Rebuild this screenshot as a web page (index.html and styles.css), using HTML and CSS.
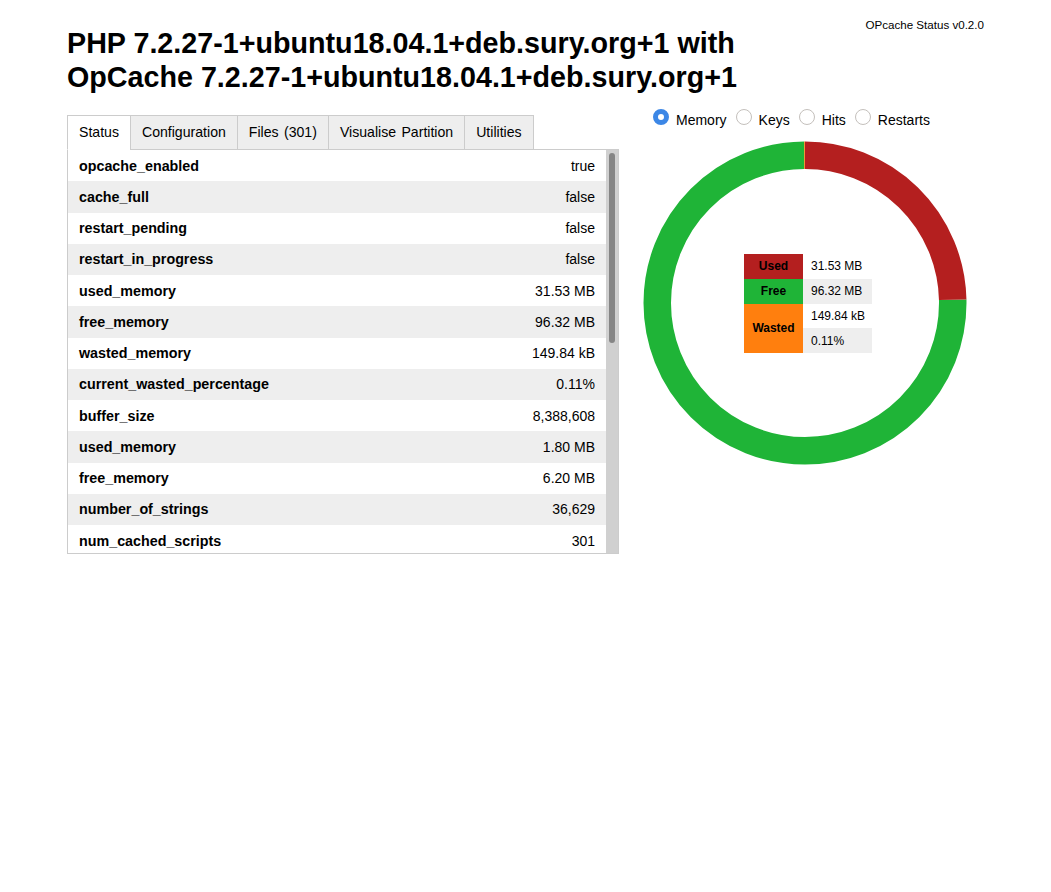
FILE: index.html
```html
<!DOCTYPE html>
<html lang="en">
<head>
<meta charset="utf-8">
<title>OPcache Status</title>
<link rel="stylesheet" href="styles.css">
</head>
<body>
<div class="container">
  <header class="header">
    <h1 class="title">PHP 7.2.27-1+ubuntu18.04.1+deb.sury.org+1 with OpCache 7.2.27-1+ubuntu18.04.1+deb.sury.org+1</h1>
    <div class="version">OPcache Status v0.2.0</div>
  </header>
  <main class="main">
    <section class="left">
      <nav class="tabs">
        <span class="tab active">Status</span>
        <span class="tab">Configuration</span>
        <span class="tab">Files (301)</span>
        <span class="tab">Visualise Partition</span>
        <span class="tab">Utilities</span>
      </nav>
      <div class="panel">
        <div class="panel-body">
          <table class="status">
            <tr><th>opcache_enabled</th><td>true</td></tr>
            <tr><th>cache_full</th><td>false</td></tr>
            <tr><th>restart_pending</th><td>false</td></tr>
            <tr><th>restart_in_progress</th><td>false</td></tr>
            <tr><th>used_memory</th><td>31.53 MB</td></tr>
            <tr><th>free_memory</th><td>96.32 MB</td></tr>
            <tr><th>wasted_memory</th><td>149.84 kB</td></tr>
            <tr><th>current_wasted_percentage</th><td>0.11%</td></tr>
            <tr><th>buffer_size</th><td>8,388,608</td></tr>
            <tr><th>used_memory</th><td>1.80 MB</td></tr>
            <tr><th>free_memory</th><td>6.20 MB</td></tr>
            <tr><th>number_of_strings</th><td>36,629</td></tr>
            <tr><th>num_cached_scripts</th><td>301</td></tr>
          </table>
        </div>
        <div class="scrollbar"><div class="thumb"></div></div>
      </div>
    </section>
    <section class="right">
      <form class="radios">
        <label class="radio"><input type="radio" name="graph" checked><span>Memory</span></label>
        <label class="radio"><input type="radio" name="graph"><span>Keys</span></label>
        <label class="radio"><input type="radio" name="graph"><span>Hits</span></label>
        <label class="radio"><input type="radio" name="graph"><span>Restarts</span></label>
      </form>
      <div class="chart">
        <svg class="donut" width="324" height="324" viewBox="0 0 324 324">
          <g transform="rotate(-90 162 162)">
            <circle cx="162" cy="162" r="147.75" fill="none" stroke="#1FB437" stroke-width="27.5" stroke-dasharray="698.6 2000" stroke-dashoffset="-228.68"/>
            <circle cx="162" cy="162" r="147.75" fill="none" stroke="#B41F1F" stroke-width="27.5" stroke-dasharray="228.68 2000"/>
            <circle cx="162" cy="162" r="147.75" fill="none" stroke="#FF7F0E" stroke-width="27.5" stroke-dasharray="1.2 2000" stroke-dashoffset="-927.2"/>
          </g>
        </svg>
        <table class="legend">
          <tr><th class="used">Used</th><td>31.53 MB</td></tr>
          <tr><th class="free">Free</th><td class="alt">96.32 MB</td></tr>
          <tr><th class="wasted" rowspan="2">Wasted</th><td>149.84 kB</td></tr>
          <tr><td class="alt">0.11%</td></tr>
        </table>
      </div>
    </section>
  </main>
</div>
</body>
</html>
```

FILE: styles.css
```css
html, body {
  margin: 0;
  padding: 0;
  background: #fff;
  color: #000;
  font-family: "Liberation Sans", Arial, sans-serif;
}

.container {
  width: 917px;
  margin: 0 auto;
  padding-top: 18px;
}

.header {
  display: flex;
  justify-content: space-between;
  align-items: flex-start;
}

.title {
  margin: 8px 0 0 0;
  width: 700px;
  font-size: 28.7px;
  line-height: 34px;
  font-weight: bold;
}

.version {
  font-size: 11.6px;
  line-height: 14px;
  white-space: nowrap;
}

.main {
  display: flex;
  gap: 24px;
  margin-top: 15px;
  align-items: flex-start;
}

.left {
  width: 552px;
  padding-top: 6px;
}

.tabs {
  display: flex;
  position: relative;
  z-index: 1;
  margin-bottom: -1px;
}

.tab {
  display: block;
  font-size: 14.1px;
  word-spacing: 1.5px;
  line-height: 16px;
  padding: 8px 11px 9px;
  border: 1px solid #ccc;
  background: #eee;
  margin-right: -1px;
  white-space: nowrap;
}

.tab.active {
  background: #fff;
  border-bottom-color: #fff;
}

.panel {
  display: flex;
  height: 403px;
  border: 1px solid #ccc;
}

.panel-body {
  flex: 1;
  overflow: hidden;
}

.scrollbar {
  width: 12px;
  flex: none;
  background: #d0d0d0;
}

.thumb {
  width: 6px;
  height: 190px;
  margin: 3px 3px 0;
  border-radius: 3px;
  background: #858585;
}

.status {
  width: 100%;
  border-collapse: collapse;
  font-size: 14px;
}

.status tr:nth-child(even) {
  background: #eee;
}

.status th,
.status td {
  height: 31.25px;
  padding: 0 11px;
  line-height: 16px;
  white-space: nowrap;
}

.status th {
  text-align: left;
  font-weight: bold;
  font-size: 14.3px;
}

.status td {
  text-align: right;
}

.right {
  width: 324px;
}

.radios {
  display: flex;
  align-items: flex-start;
  height: 20px;
  margin: 0;
  padding-left: 10px;
  font-size: 14px;
  line-height: 16px;
}

.radio {
  display: flex;
  align-items: flex-start;
  margin-right: 9px;
}

.radio input {
  appearance: none;
  -webkit-appearance: none;
  width: 16px;
  height: 16px;
  margin: 0 7px 0 0;
  border: 1px solid #c4c0bc;
  border-radius: 50%;
  background: #fff;
  box-sizing: border-box;
  flex: none;
}

.radio input:checked {
  border: 5px solid #3c87e6;
  background: #fff;
}

.radio span {
  margin-top: 2.5px;
}

.chart {
  position: relative;
  width: 324px;
  height: 324px;
  margin-top: 12px;
}

.donut {
  display: block;
}

.legend {
  position: absolute;
  left: 101px;
  top: 113px;
  border-collapse: collapse;
  font-size: 12px;
  line-height: 14px;
}

.legend th {
  width: 59px;
  padding: 0;
  text-align: center;
  font-weight: bold;
}

.legend td {
  width: 61px;
  height: 24.75px;
  padding: 0 0 0 8px;
  text-align: left;
  background: #fff;
}

.legend td.alt {
  background: #eee;
}

.legend .used { background: #B41F1F; }
.legend .free { background: #1FB437; }
.legend .wasted { background: #FF7F0E; }
```
